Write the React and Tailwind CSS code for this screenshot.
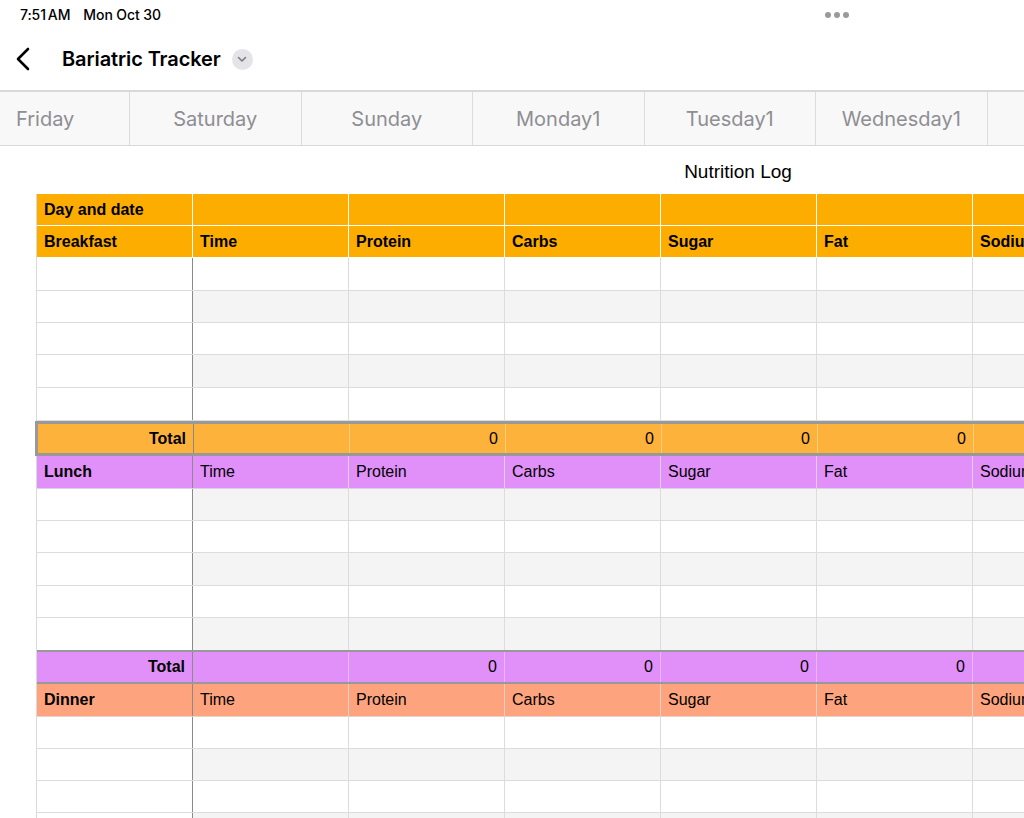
import React from "react";

const COLS = 9;
const cols = Array.from({ length: COLS }, (_, i) => i);

const headerLabels = ["Time", "Protein", "Carbs", "Sugar", "Fat", "Sodium", "Fluids", "Calories"];

function HeaderRow({ first, labels, bg, bold, h, line }) {
  return (
    <div className={`flex ${bg} ${h} border-b ${line}`}>
      {cols.map((i) => (
        <div
          key={i}
          className={`w-[156px] shrink-0 flex items-center pl-[7px] border-r ${i === 0 ? (line === "border-white" ? "border-white" : "border-r-[#8a8a8a]") : line} text-[16px] text-black ${i === 0 || bold ? "font-bold" : "font-normal"}`}
        >
          {i === 0 ? first : labels ? labels[i - 1] : ""}
        </div>
      ))}
    </div>
  );
}

function DataRow({ gray, h }) {
  return (
    <div className={`flex ${h} border-b border-[#dcdcdc]`}>
      {cols.map((i) => (
        <div
          key={i}
          className={`w-[156px] shrink-0 border-r ${i === 0 ? "bg-white border-r-[#8a8a8a]" : `${gray ? "bg-[#f4f4f4]" : "bg-white"} border-[#dcdcdc]`}`}
        />
      ))}
    </div>
  );
}

function TotalRow({ bg, h, border }) {
  return (
    <div className={`flex ${bg} ${h} ${border} border-[#999999]`}>
      {cols.map((i) => (
        <div
          key={i}
          className={`w-[156px] shrink-0 flex items-center justify-end pr-[7px] border-r ${i === 0 ? "border-r-[#8a8a8a]" : "border-white/35"} text-[16px] text-black ${i === 0 ? "font-bold" : "font-normal"}`}
        >
          {i === 0 ? "Total" : i >= 2 ? "0" : ""}
        </div>
      ))}
    </div>
  );
}

export default function App() {
  const tabs = ["Saturday", "Sunday", "Monday1", "Tuesday1", "Wednesday1", "Thursday1"];
  return (
    <div className="w-[1024px] h-[818px] overflow-hidden bg-white flex flex-col" style={{ fontFamily: "Inter, 'Liberation Sans', sans-serif" }}>
      {/* status bar */}
      <div className="h-[28px] flex items-center shrink-0 relative">
        <div className="pl-[20px] text-[14px] font-medium text-black tracking-[-0.1px]">
          7:51<span className="ml-[2px]">AM</span>
          <span className="ml-[13px]">Mon Oct 30</span>
        </div>
        <div className="absolute left-[825px] top-[12px] flex gap-[3px]">
          <span className="w-[6px] h-[6px] rounded-full bg-[#9a9a9e]" />
          <span className="w-[6px] h-[6px] rounded-full bg-[#9a9a9e]" />
          <span className="w-[6px] h-[6px] rounded-full bg-[#9a9a9e]" />
        </div>
      </div>
      {/* nav bar */}
      <div className="h-[62px] flex items-center shrink-0">
        <svg className="ml-[15px]" width="16" height="24" viewBox="0 0 16 24" fill="none">
          <path d="M13 2 L3 12 L13 22" stroke="#000" strokeWidth="2.6" strokeLinecap="round" strokeLinejoin="round" />
        </svg>
        <div className="ml-[31px] text-[20px] font-semibold text-black tracking-[-0.1px]">Bariatric Tracker</div>
        <div className="ml-[11px] w-[21px] h-[21px] rounded-full bg-[#e4e4e8] flex items-center justify-center">
          <svg width="10" height="7" viewBox="0 0 10 7" fill="none">
            <path d="M1.5 1.5 L5 5 L8.5 1.5" stroke="#7c7c82" strokeWidth="1.6" strokeLinecap="round" strokeLinejoin="round" />
          </svg>
        </div>
      </div>
      {/* tabs */}
      <div className="h-[56px] flex shrink-0 border-t-2 border-b border-[#d9d9d9] bg-[#f8f8f8] overflow-hidden">
        <div className="w-[130px] shrink-0 flex items-center pl-[16px] border-r border-[#dcdcdc] text-[20px] text-[#8e8e93]">Friday</div>
        {tabs.map((t) => (
          <div key={t} className="w-[171.5px] shrink-0 flex items-center justify-center border-r border-[#dcdcdc] text-[20px] text-[#8e8e93]">
            {t}
          </div>
        ))}
      </div>
      {/* sheet */}
      <div className="flex-1 overflow-hidden pl-[36px]" style={{ fontFamily: "'Liberation Sans', Arial, sans-serif" }}>
        <div className="w-[1404px]">
          <div className="h-[24px] mt-[14px] mb-[10px] flex items-center justify-center text-[19px] text-black">Nutrition Log</div>
          <div className="border-l border-[#d9d9d9]">
            <HeaderRow first="Day and date" labels={null} bg="bg-[#fcad00]" bold h="h-[32px]" line="border-white" />
            <HeaderRow first="Breakfast" labels={headerLabels} bg="bg-[#fcad00]" bold h="h-[32px]" line="border-white" />
            <DataRow h="h-[33px]" />
            <DataRow h="h-[32px]" gray />
            <DataRow h="h-[32px]" />
            <DataRow h="h-[33px]" gray />
            <DataRow h="h-[33px]" />
            <div className="-ml-[2px]">
              <TotalRow bg="bg-[#fdb23c]" h="h-[35px]" border="border-y-[3px] border-l-[3px]" />
            </div>
            <HeaderRow first="Lunch" labels={headerLabels} bg="bg-[#e190fa]" h="h-[33px]" line="border-[#dcd0e4]" />
            <DataRow h="h-[32px]" gray />
            <DataRow h="h-[32px]" />
            <DataRow h="h-[33px]" gray />
            <DataRow h="h-[32px]" />
            <DataRow h="h-[33px]" gray />
            <div className="-mt-[1px]">
              <TotalRow bg="bg-[#e190fa]" h="h-[34px]" border="border-y-2" />
            </div>
            <HeaderRow first="Dinner" labels={headerLabels} bg="bg-[#fda47e]" h="h-[33px]" line="border-[#e8d2c8]" />
            <DataRow h="h-[32px]" />
            <DataRow h="h-[32px]" gray />
            <DataRow h="h-[32px]" />
            <DataRow h="h-[32px]" gray />
          </div>
        </div>
      </div>
    </div>
  );
}
